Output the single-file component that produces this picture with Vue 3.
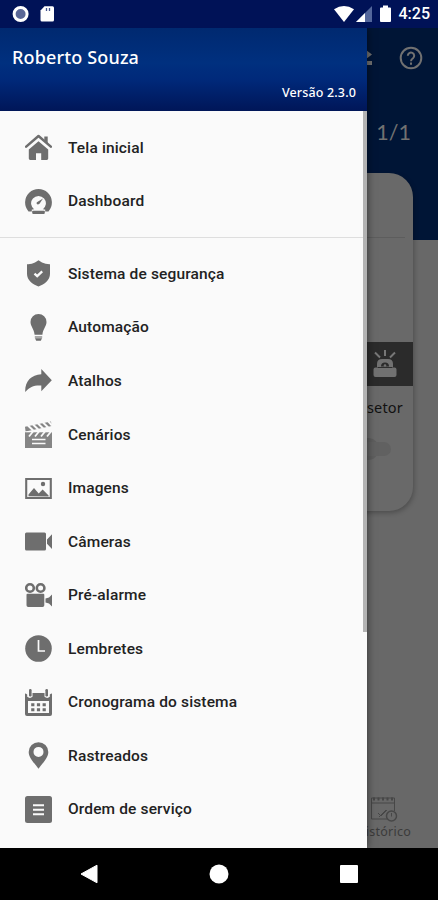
<script setup>
const primary = [
  { label: 'Tela inicial', icon: 'home' },
  { label: 'Dashboard', icon: 'gauge' }
]
const secondary = [
  { label: 'Sistema de segurança', icon: 'shield' },
  { label: 'Automação', icon: 'bulb' },
  { label: 'Atalhos', icon: 'arrow' },
  { label: 'Cenários', icon: 'clapper' },
  { label: 'Imagens', icon: 'image' },
  { label: 'Câmeras', icon: 'camera' },
  { label: 'Pré-alarme', icon: 'film' },
  { label: 'Lembretes', icon: 'clock' },
  { label: 'Cronograma do sistema', icon: 'calendar' },
  { label: 'Rastreados', icon: 'pin' },
  { label: 'Ordem de serviço', icon: 'order' }
]
const groups = [primary, secondary]
const icons = {
  home: '<path d="M1.2 12.6 13.5 2 25.8 12.6" fill="none" stroke="#6e6e6e" stroke-width="2.5" stroke-linecap="round" stroke-linejoin="round"/><path d="M19.3 2.5h3.4v7l-3.4-3z"/><path d="M13.5 7.2 23.2 15.4V24.6q0 1.4-1.4 1.4H16.2V19.2H11V26H5.2q-1.4 0-1.4-1.4V15.4z"/>',
  gauge: '<path d="M3.5 23.4A13.4 13.4 0 1 1 23.5 23.4H20.2V21.5H17.6A7.400 7.400 0 1 0 9.400 21.500H6.800V23.400z"/><path d="M8.500 21.200h10" stroke="#fafafa" stroke-width="1.200"/><rect x="7.200" y="22.700" width="12.600" height="3.200" rx=".8"/><path d="M11.900 14.200 18 10.400 14.500 15.800q-1.800 1.400-2.800 0-.4-1 .2-1.600z"/>',
  shield: '<path d="M13.500.2 17 2.500q3.700 1.800 8 1.700v9.500c0 6.500-5.500 10.500-11.500 12.800C7.500 24.200 2 20.200 2 13.700V4.200q4.500.3 8-1.700z"/><path d="m9.500 13.600 2.700 2.500 5-4.800" fill="none" stroke="#fafafa" stroke-width="2.300"/>',
  bulb: '<path d="M13.500 0a8 8 0 0 1 8 8c0 4.500-3.500 6.500-4.100 12.800H9.600C9 14.500 5.500 12.500 5.500 8a8 8 0 0 1 8-8z"/><path d="M9.800 22h7.400v2.200H9.800z" fill="#aaa"/><path d="M10 24.200h7l-1.200 2.500h-4.600z"/>',
  arrow: '<path d="M16.300 2 26.800 13.200 16.300 24.300V18.500C9.500 18 4.700 19.700.2 24.900-.2 14.500 6 7.700 16.300 7.200z"/>',
  clapper: '<path d="M0 11.200h27V27H0z" fill="#858585"/><path d="M0 5.800 26 .4l.6 4.700L.6 10.500z" fill="#858585"/><path d="M3 4.500 8.200 9.500M8 3.500 13.200 8.500M13 2.500 18.200 7.500M18 1.500 23.200 6.500M23 0 27 4.500" stroke="#fafafa" stroke-width="2"/><path d="M.5 10.700h26" stroke="#fafafa" stroke-width=".7"/><path d="m4 15.500 4-5M10 15.500l4-5M16 15.500l4-5M22 15.500l4-5" stroke="#fafafa" stroke-width="1.800"/><path d="M7 18.600h13.500M7 22.600h13.500" stroke="#fafafa" stroke-width="1.500"/>',
  image: '<path d="M1.200 4h24.600v19H1.200z" fill="none" stroke="#6e6e6e" stroke-width="2.100"/><path d="M3.500 21.300V19.500L9 13l4.700 5.400 3.900-3.900 6 6v1z"/><circle cx="18" cy="9" r="2.200"/>',
  camera: '<path d="M1.500 4.500h18q1.500 0 1.500 1.500v15q0 1.500-1.500 1.500h-18Q0 22.500 0 21V6q0-1.500 1.500-1.500zM22 11.500 27 6.300V21l-5-5.200z"/>',
  film: '<circle cx="5" cy="6" r="3.800" fill="none" stroke="#6e6e6e" stroke-width="2.600"/><circle cx="15.600" cy="6" r="3.800" fill="none" stroke="#6e6e6e" stroke-width="2.600"/><path d="M2.500 11.800h15.800q1 0 1 1v10.500q0 1.700-1.700 1.700H3.200q-1.700 0-1.700-1.700V12.800q0-1 1-1zM20.500 16.500l3.500-1 3-3v12l-3-3-3.500-1z"/>',
  clock: '<circle cx="13.500" cy="13.500" r="13.300"/><path d="M13.500 5v11H20" fill="none" stroke="#fafafa" stroke-width="1.700"/>',
  calendar: '<path fill-rule="evenodd" d="M0 4.500q1 0 2.200 1v2.300q2.800 2.300 5.300 0V4h12v3.800q2.800 2.300 5.300 0V5.500q1.200-1 2.200-1V25q0 2-2 2H2q-2 0-2-2zM3 12v12h21V12z"/><rect x="4" y="0" width="2.600" height="7.500" rx="1.200"/><rect x="20.400" y="0" width="2.600" height="7.500" rx="1.200"/><path d="M6.200 15.700h14.600M6.200 20.800h14.600" stroke="#6e6e6e" stroke-width="3" stroke-dasharray="3.200 2.500"/>',
  pin: '<path fill-rule="evenodd" d="M13.500.2A9.800 9.800 0 0 1 23.300 10C23.300 16.500 16.500 22 13.500 26.800 10.500 22 3.700 16.500 3.700 10A9.800 9.800 0 0 1 13.500.2zM13.500 4.900a5 5 0 1 0 0 10 5 5 0 0 0 0-10z"/>',
  order: '<rect width="27" height="27" rx="2.500"/><path d="M8 9.200h11M8 13.700h11M8 18.200h11" stroke="#fafafa" stroke-width="2"/>'
}
</script>

<template>
  <div class="phone">
    <header class="status">
      <svg width="42" height="18" viewBox="0 0 42 18">
        <circle cx="8.600" cy="9" r="6.500" fill="#5a6796" stroke="#fff" stroke-width="3" />
        <path d="M32.500 1.200h8q1.500 0 1.500 1.500V15q0 1.500-1.500 1.500H30q-1.500 0-1.500-1.500V5.500z" fill="#fff" />
        <path d="M34.500 3v3M37.500 3v3" stroke="#46568f" stroke-width="1.300" />
      </svg>
      <div class="st-right">
        <svg width="60" height="18" viewBox="0 0 60 18">
          <path d="M1 4.300Q11 -2.200 21 4.300L11 17z" fill="#fff" />
          <path d="M23 17 39 1v16z" fill="#53669b" />
          <path d="M23 17 32 8v9z" fill="#fff" />
          <path d="M50 .5h5v2h2q1 0 1 1V16q0 1-1 1h-9q-1 0-1-1V3.500q0-1 1-1h2z" fill="#fff" />
        </svg>
        <span>4:25</span>
      </div>
    </header>

    <main class="screen">
      <section class="hero">
        <div class="tools">
          <svg width="12" height="22" viewBox="0 0 12 22" fill="#717171"><path d="M4 3 10 7.500 4 12z" /><path d="M3 14h7v4H3z" /></svg>
          <svg width="24" height="24" viewBox="0 0 24 24" fill="none" stroke="#717171" stroke-width="2">
            <circle cx="12" cy="12" r="10.300" />
            <path d="M8.800 9.800a3.200 3.200 0 1 1 5.200 2.500C12.600 13.300 12 13.800 12 15.200M12 16.600v2.200" />
          </svg>
        </div>
        <div class="pager">1/1</div>
      </section>
      <section class="card">
        <div class="card-top"></div>
        <div class="card-mid"></div>
        <div class="siren">
          <svg width="26" height="30" viewBox="0 0 26 30">
            <path d="M13 1v6M3 3.500l5 5M23 3.500l-5 5" stroke="#777" stroke-width="2" />
            <path d="M5 18.500V15q0-5 5-5h6q5 0 5 5v3.500h1.500q2 0 2 2V26q0 2-2 2h-19q-2 0-2-2v-5.500q0-2 2-2z" fill="#717171" />
            <path d="M5.500 18.500h15" stroke="#2e2e2e" stroke-width="1.200" />
            <path d="M9 17.500a4 4 0 0 1 8 0z" fill="#2b2b2b" />
            <circle cx="13" cy="16.500" r="1.300" fill="#717171" />
          </svg>
        </div>
        <div class="sector">setor</div>
        <div class="switch"><i></i></div>
      </section>
      <footer class="tab">
        <svg width="28" height="28" viewBox="0 0 28 28" fill="none" stroke="#474747" stroke-width="1">
          <path d="M17 24H1.500V3h23v13M1.500 8h23" />
          <path d="M3 4h21" stroke-width="3" stroke-dasharray="2 2.500" />
          <path d="m8 18 3 3 6-6M9 22l7-7" />
          <circle cx="21.500" cy="21" r="5" stroke-width="1.500" /><path d="M21.500 18v3.500" />
        </svg>
        <span>Histórico</span>
      </footer>

      <aside class="drawer">
        <div class="profile">
          <div class="name">Roberto Souza</div>
          <div class="version">Versão 2.3.0</div>
        </div>
        <nav class="menu">
          <ul v-for="(group, g) in groups" :key="g">
            <li v-for="item in group" :key="item.label">
              <svg width="27" height="27" viewBox="0 0 27 27" fill="#6e6e6e" v-html="icons[item.icon]"></svg>
              <span>{{ item.label }}</span>
            </li>
          </ul>
        </nav>
        <i class="scrollbar"></i>
      </aside>
    </main>

    <footer class="navbar">
      <svg width="18" height="20" viewBox="0 0 18 20"><path d="M17 1.200v17.600L1 10z" fill="#fff" stroke="#fff" stroke-linejoin="round" /></svg>
      <svg width="20" height="20" viewBox="0 0 20 20"><circle cx="10" cy="10" r="9.500" fill="#fff" /></svg>
      <svg width="18" height="18" viewBox="0 0 18 18"><rect width="18" height="18" rx="1" fill="#fff" /></svg>
    </footer>
  </div>
</template>

<style>
body { margin: 0; }
</style>

<style scoped>
.phone { width: 438px; height: 900px; display: grid; grid-template-rows: 28px 820px 52px; overflow: hidden; font-family: Roboto, "Liberation Sans", sans-serif; }
svg { display: block; flex: none; }
.status { background: #001257; display: flex; justify-content: space-between; align-items: center; padding: 0 8px 0 12px; color: #fff; }
.st-right { display: flex; align-items: center; gap: 6px; font-size: 16px; font-weight: 500; line-height: 20px; }
.screen { position: relative; background: #686868; overflow: hidden; display: flex; flex-direction: column; }
.hero { height: 212px; box-sizing: border-box; background: #001536; color: #717171; flex: none; }
.tools { height: 60px; display: flex; align-items: center; justify-content: flex-end; gap: 25px; padding-right: 15px; }
.pager { text-align: right; padding: 29px 27px 0 0; font: 21.500px/30px Lato, sans-serif; }
.card { margin: -67px 25px 0; height: 338px; flex: none; background: #696969; border-radius: 0 24px 24px 0; box-shadow: 1px 2px 5px rgba(0, 0, 0, .26); overflow: hidden; }
.card-top { height: 64px; border-bottom: 1px solid #5d5d5d; margin-right: 8px; }
.card-mid { height: 104px; }
.siren { height: 44px; background: #2b2b2b; display: flex; align-items: center; justify-content: flex-end; padding-right: 15px; }
.sector { height: 43px; line-height: 43px; padding-right: 10px; text-align: right; font-family: "Noto Sans", sans-serif; font-size: 14.500px; letter-spacing: .2px; color: #111; }
.switch { display: flex; justify-content: flex-end; align-items: center; margin-right: 22px; height: 40px; }
.switch::after { content: ""; width: 30px; height: 14px; border-radius: 7px; background: #616161; }
.switch i { width: 22px; height: 22px; border-radius: 50%; background: #5e5e5e; margin-right: -18px; }
.tab { margin: auto 27px 7px auto; display: flex; flex-direction: column; align-items: flex-end; color: #3b3b3b; font: 12.500px/18px "Noto Sans", sans-serif; letter-spacing: .25px; }
.tab svg { margin-right: 13px; }
.drawer { position: absolute; top: 0; left: 0; bottom: 0; width: 367px; background: #fafafa; box-shadow: 0 0 8px rgba(0, 0, 0, .55); }
.profile { height: 83px; box-sizing: border-box; padding: 17px 11px 0 12px; color: #fff; font-family: "Noto Sans", "Open Sans", sans-serif; font-weight: 500; background: linear-gradient(#002970 0%, #00307f 42%, #00297a 62%, #001658 100%); }
.name { font-size: 18px; line-height: 25px; letter-spacing: .15px; }
.version { font-size: 12.500px; line-height: 18px; margin-top: 14px; text-align: right; letter-spacing: .15px; }
.menu { padding-top: 10px; }
.menu ul { list-style: none; margin: 0; padding: 0; }
.menu ul + ul { margin-top: 8.500px; padding-top: 9.500px; border-top: 1px solid #dedede; }
.menu li { height: 53.550px; padding-left: 25px; display: flex; align-items: center; gap: 16px; font-size: 15.500px; font-weight: 500; color: #222; letter-spacing: .14px; }
.scrollbar { position: absolute; right: 0; top: 83px; width: 4px; height: 521px; background: #b3b3b3; }
.navbar { background: #000; display: grid; grid-template-columns: 178px 82px 178px; align-items: center; justify-items: center; }
</style>
